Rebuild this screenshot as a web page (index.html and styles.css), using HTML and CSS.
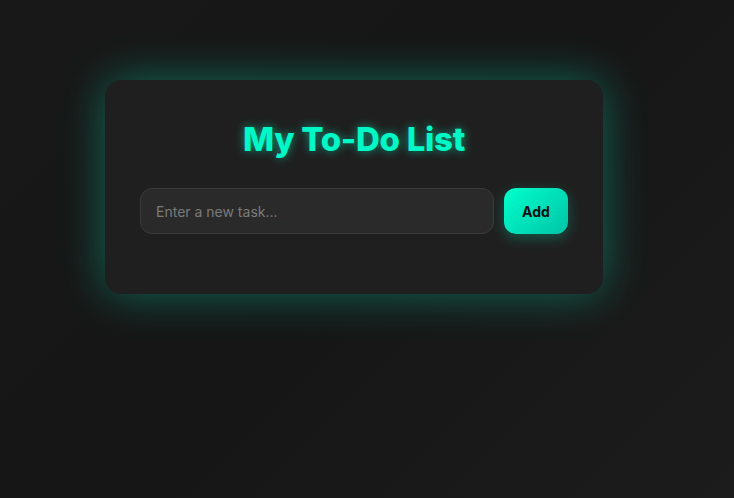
FILE: index.html
```html
<!DOCTYPE html>
<html>
<head>
	<meta charset="utf-8" />
	<title>My To-Do List</title>
	<link rel="stylesheet" href="styles.css">
</head>
<body>
	<div class="container">
		<h1>My To-Do List</h1>
		<div class="input-row">
			<input type="text" id="taskInput" placeholder="Enter a new task...">
			<button id="addBtn">Add</button>
		</div>
		<ul id="taskList"></ul>
	</div>
</body>
</html>
```

FILE: styles.css
```css
* {
	box-sizing: border-box;
}

html, body {
	height: 100%;
}

body {
	margin: 0;
	padding: 80px 26px 0 0;
	font-family: "Inter", "Liberation Sans", sans-serif;
	background: linear-gradient(135deg, #181818 0%, #161616 50%, #1c1c1c 100%);
	color: #eee;
}

.container {
	width: 498px;
	margin: 0 auto;
	padding: 35px;
	background: #1f1f1f;
	border-radius: 16px;
	box-shadow: 0 0 45px rgba(0, 255, 200, 0.35);
}

h1 {
	margin: 0 0 25px;
	text-align: center;
	font-size: 33px;
	font-weight: 800;
	line-height: 48px;
	letter-spacing: -0.3px;
	color: #00f7c6;
	text-shadow: 0 0 10px rgba(0, 255, 200, 0.55);
}

.input-row {
	display: flex;
	gap: 10px;
}

.input-row input {
	flex: 1;
	height: 46px;
	padding: 0 15px;
	border: 1px solid #3a3a3a;
	border-radius: 12px;
	background: #2a2a2a;
	color: #ddd;
	font-family: inherit;
	font-size: 14px;
	outline: none;
}

.input-row input::placeholder {
	color: #7a7a7a;
}

.input-row button {
	width: 64px;
	height: 46px;
	border: none;
	border-radius: 12px;
	background: linear-gradient(135deg, #00ffcc, #00c4a7);
	color: #111;
	font-family: inherit;
	font-size: 14px;
	font-weight: 700;
	box-shadow: 0 4px 14px rgba(0, 255, 200, 0.25);
	cursor: pointer;
}

#taskList {
	list-style: none;
	margin: 25px 0 0;
	padding: 0;
}
```
